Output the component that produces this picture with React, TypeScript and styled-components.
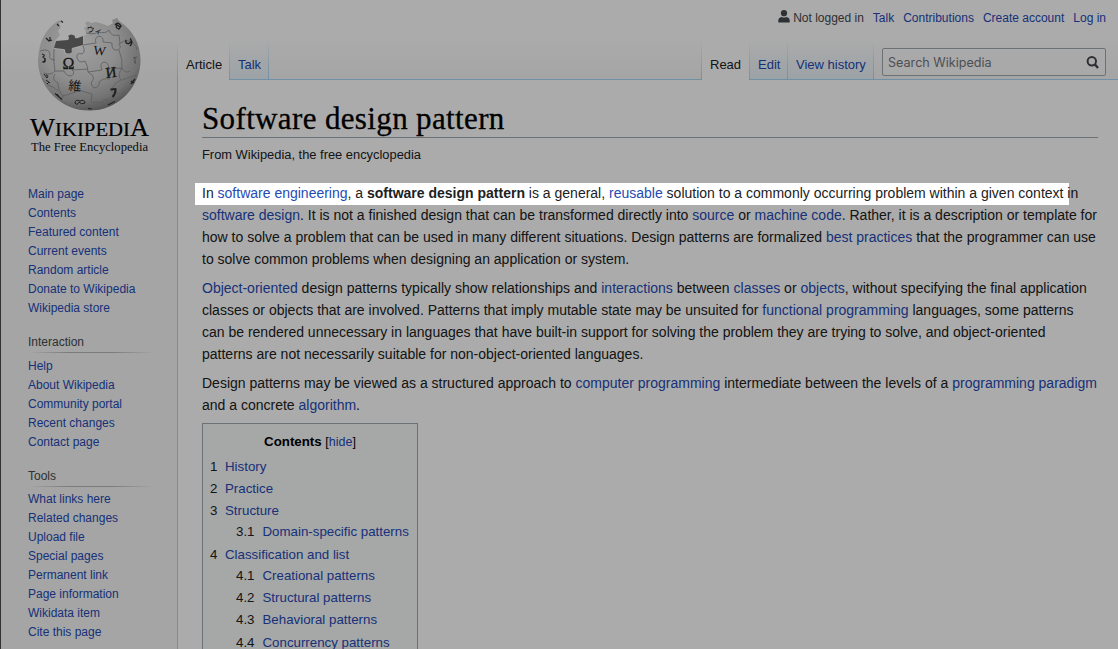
import React from "react";
import styled, { createGlobalStyle } from "styled-components";

const BLUE = "#a7d7f9";
const LINK = "#254ab4";

const Global = createGlobalStyle`
  html, body { margin: 0; padding: 0; background: #f6f6f6; overflow: hidden; }
  * { box-sizing: border-box; }
  body { font-family: "Liberation Sans", Arial, sans-serif; color: #202122; }
`;

const Page = styled.div`
  position: relative;
  display: flex;
  width: 1118px;
  height: 649px;
  overflow: hidden;
  border-left: 1px solid #333;
  background: linear-gradient(#fff 0, #fff 40px, #f6f6f6 80px);
`;

const Spotlight = styled.div`
  position: absolute;
  left: 194px;
  top: 183px;
  width: 874px;
  height: 22px;
  box-shadow: 0 0 0 1200px rgba(0, 0, 0, 0.33);
  pointer-events: none;
`;

const Link = styled.a`
  color: ${LINK};
  text-decoration: none;
`;

const Sidebar = styled.aside`
  width: 176px;
  flex: none;
`;

const LogoBox = styled.div`
  height: 185px;
  svg { display: block; }
`;

const Portal = styled.nav`
  padding-left: 27px;
  margin-bottom: 17px;
  font-size: 12px;
`;

const PortalTitle = styled.h3<{ $gap?: number }>`
  margin: 0 0 ${(p) => p.$gap ?? 4}px;
  width: 126px;
  height: 18px;
  font-size: 12px;
  font-weight: 400;
  line-height: 15px;
  color: #45494d;
  background: linear-gradient(to right, rgba(160,164,170,0) 0, #b4b7bc 33%, #b4b7bc 66%, rgba(160,164,170,0) 100%) bottom / 100% 1px no-repeat;
`;

const PortalItem = styled.div`
  height: 19px;
  line-height: 19px;
  white-space: nowrap;
`;

const Main = styled.div`
  flex: 1;
  display: flex;
  flex-direction: column;
`;

const Personal = styled.div`
  flex: none;
  height: 40px;
  display: flex;
  justify-content: flex-end;
  gap: 9px;
  padding: 8px 12px 0 0;
  font-size: 12px;
  line-height: 20px;
`;

const User = styled.span`
  display: flex;
  color: #45494d;
  svg { margin: 2px 3px 0 0; }
`;

const NavRow = styled.div`
  flex: none;
  height: 40px;
  display: flex;
  background: linear-gradient(${BLUE}, ${BLUE}) bottom / 100% 1px no-repeat;
`;

const Tab = styled.div<{ $w: number; $active?: boolean; $first?: boolean }>`
  width: ${(p) => p.$w}px;
  height: 40px;
  padding: 16px 0 0 8px;
  font-size: 13px;
  line-height: 18px;
  white-space: nowrap;
  background:
    linear-gradient(rgba(167,215,249,0), ${BLUE}) right / 1px 100% no-repeat,
    ${(p) => (p.$first ? `linear-gradient(rgba(167,215,249,0), ${BLUE}) left / 1px 100% no-repeat,` : "")}
    ${(p) =>
      p.$active
        ? "linear-gradient(#fff, #fff)"
        : `linear-gradient(${BLUE}, ${BLUE}) bottom / 100% 1px no-repeat, linear-gradient(#fff, #e8f2f8)`};
  ${(p) => p.$first && "padding-left: 9px;"}
`;

const Spacer = styled.div`
  flex: 1;
`;

const Search = styled.div`
  display: flex;
  justify-content: space-between;
  width: 224px;
  height: 28px;
  margin: 8px 12px 0 8px;
  padding: 0 6px 0 5px;
  border: 1px solid #a2a9b1;
  border-radius: 2px;
  background: rgba(255, 255, 255, 0.5);
  color: #72777d;
  font-family: Inter, "Liberation Sans", sans-serif;
  font-size: 12.6px;
  line-height: 27px;
  white-space: nowrap;
  svg { margin-top: 7px; }
`;

const Content = styled.main`
  flex: 1;
  padding: 21px 20px 0 24px;
  border-left: 1px solid ${BLUE};
  background: #fff;
`;

const Title = styled.h1`
  margin: 0;
  height: 37px;
  border-bottom: 1px solid #a2a9b1;
  font-family: "Liberation Serif", serif;
  font-size: 31px;
  font-weight: 400;
  line-height: 35px;
  letter-spacing: 0.36px;
  color: #000;
  -webkit-text-stroke: 0.3px #000;
  white-space: nowrap;
`;

const Subtitle = styled.div`
  margin: 8px 0 18px;
  height: 18px;
  font-size: 12.88px;
  line-height: 18px;
`;

const Paragraph = styled.p`
  margin: 0 0 7px;
  font-size: 14px;
  line-height: 22px;
`;

const Line = styled.span`
  display: block;
  white-space: nowrap;
`;

const Toc = styled.div`
  width: 216px;
  height: 260px;
  padding: 7px;
  border: 1px solid #a2a9b1;
  background: #f8f9fa;
  font-size: 13.3px;
`;

const TocTitle = styled.div`
  height: 25px;
  line-height: 22px;
  text-align: center;
  color: #000;
  small { font-size: 12.5px; }
`;

const TocRow = styled.div<{ $sub?: boolean }>`
  display: flex;
  height: ${(p) => (p.$sub ? 22.15 : 22)}px;
  line-height: ${(p) => (p.$sub ? 20 : 22)}px;
  padding-left: ${(p) => (p.$sub ? 26 : 0)}px;
  white-space: nowrap;
  span { width: ${(p) => (p.$sub ? 26.5 : 15)}px; }
`;

const Globe = () => (
  <svg width="176" height="170" viewBox="1 0 176 170">
    <defs>
      <radialGradient id="ball" cx="0.4" cy="0.3" r="0.74">
        <stop offset="0" stopColor="#eee" />
        <stop offset="0.5" stopColor="#d4d4d4" />
        <stop offset="0.82" stopColor="#aaa" />
        <stop offset="1" stopColor="#777" />
      </radialGradient>
    </defs>
    <path
      d="M66 19 L62 20 L59 24 L61 27 L58 31 L60 35 L55 41 L54 49 L64 50 Q63 54 68 54 Q73 53 71 49 L83 46 L84 35 L87 35 L84 28 L87 26 L85 23 Q88 20 91 23 L96 22 L103 24 L108 26 L113 23 L112 20 L117 18 L119 21 Q140 35 140.500 60 A51.250 50.500 0 0 1 89.250 110.500 A51.250 50.500 0 0 1 38 60 Q39 33 58 21 Z"
      fill="url(#ball)"
    />
    <path
      d="M56 41 L68 40 Q70 38 68 36 Q71 33 75 36 Q74 39 78 38 L83 36 L83 45 L72 48 Q71 50 72 52 Q68 55 65 52 Q66 49 63 49 L54 48 Z"
      fill="#6c6c6c"
    />
    <g fill="none" stroke="#8c8c8c" strokeWidth="0.8">
      <path d="M83 46 Q86 52 82 54 Q76 52 77 58 Q79 64 85 61 Q88 66 88 72 Q95 76 93 80 Q89 84 94 88 Q100 87 99 82 Q103 78 110 79" />
      <path d="M40 51 Q49 48 50 54 Q48 60 55 60 M54 49 Q53 62 55 71 Q50 76 44 73 M55 71 L64 71 Q66 76 71 76 Q76 73 72 70 L88 69 M88 72 L102 70 Q99 63 104 62 Q110 63 108 69 L122 68 Q125 74 130 71" />
      <path d="M83 45 L96 43 Q94 38 99 36 Q104 37 103 42 L112 43 Q111 51 118 50 Q122 48 119 44 L126 40 M119 50 Q123 60 122 68 Q117 75 121 80 Q113 84 112 90 M55 74 Q51 80 58 83 Q58 91 63 96 L76 92 Q78 88 82 91 L92 94 L91 102 L102 103 Q104 98 108 100 M126 40 Q136 42 137 50 M122 80 L136 75 M63 96 Q59 101 66 104 M42 78 Q47 86 53 87 L58 91 M86 33 Q94 35 98 32 Q106 34 109 30 M109 30 Q111 37 119 35 L120 43 M110 91 Q118 95 125 92" />
    </g>
    <g fill="#242424" fontFamily="Liberation Serif, serif" textAnchor="middle">
      <text x="68.500" y="68.500" fontSize="16" stroke="#242424" strokeWidth=".3">Ω</text>
      <text x="99.500" y="55" fontSize="13" transform="rotate(7 99 51)">W</text>
      <text x="111" y="77.500" fontSize="15" transform="rotate(-7 111 72)" stroke="#242424" strokeWidth=".3">И</text>
      <text x="75" y="90.500" fontSize="13" fontFamily="Noto Sans CJK JP, sans-serif" transform="rotate(5 75 86)">維</text>
      <text x="94.500" y="33" fontSize="8" fontFamily="Noto Sans CJK JP, sans-serif" transform="rotate(10 94 30)">ウィ</text>
    </g>
    <g fill="none" stroke="#333" strokeWidth="1.400">
      <path d="M110.500 89.500 L115.500 89 Q116 93 112.500 97" strokeWidth="2" />
      <path d="M126 40 Q125 44 129 43.500 Q133 41 130 38.500 M131 40 Q133 43 130 46" />
      <path d="M115 25 Q118 21 121 26 L119 29 Q115 28 117 25 L120 27" />
      <path d="M46 38 L49 41 L52 40 M50 37 L50 41 M57 24 L59 26 M61 21 L63 22.500" strokeWidth="1.200" />
      <path d="M42 54 Q46 55 43 57 Q47 60 43 62 Q46 63 45 58" strokeWidth="1.200" />
      <path d="M44 74 L47 78 Q49 75 46 75 M46 80 L50 83 M47 84 L49 82" strokeWidth="1" />
      <path d="M75 103 Q75 99 80 101 Q85 99 85 103 Q81 105 79 102 Q77 106 75 103" strokeWidth="1" />
      <path d="M55 93.500 L62 99.500 M57 94 L60 98 M108 105 L115 101.500 M88 108.500 L92 109" strokeWidth="1.200" />
      <path d="M131 84 L135 79 M131 81 L134 83" strokeWidth="1.500" />
      <path d="M133 58 L137 57 M134 61 L136 64 M135 58 L135 63" stroke="#777" strokeWidth="1" />
    </g>
    <g fill="#000" stroke="#000" strokeWidth=".2" fontFamily="Liberation Serif, serif">
      <text x="30" y="136" fontSize="25" textLength="25" lengthAdjust="spacingAndGlyphs">W</text>
      <text x="55" y="136" fontSize="19" textLength="75" lengthAdjust="spacingAndGlyphs">IKIPEDI</text>
      <text x="130" y="136" fontSize="25" textLength="19" lengthAdjust="spacingAndGlyphs">A</text>
      <text x="31" y="150.500" fontSize="13.500" fill="#111" stroke="none" textLength="117" lengthAdjust="spacingAndGlyphs">The Free Encyclopedia</text>
    </g>
  </svg>
);

const first = ["Main page", "Contents", "Featured content", "Current events", "Random article", "Donate to Wikipedia", "Wikipedia store"];
const interaction = ["Help", "About Wikipedia", "Community portal", "Recent changes", "Contact page"];
const tools = ["What links here", "Related changes", "Upload file", "Special pages", "Permanent link", "Page information", "Wikidata item", "Cite this page"];

const toc: [string, string][] = [
  ["1", "History"],
  ["2", "Practice"],
  ["3", "Structure"],
  ["3.1", "Domain-specific patterns"],
  ["4", "Classification and list"],
  ["4.1", "Creational patterns"],
  ["4.2", "Structural patterns"],
  ["4.3", "Behavioral patterns"],
  ["4.4", "Concurrency patterns"],
];

const Items = ({ items }: { items: string[] }) => (
  <>
    {items.map((t) => (
      <PortalItem key={t}>
        <Link>{t}</Link>
      </PortalItem>
    ))}
  </>
);

export default function App() {
  return (
    <>
      <Global />
      <Page>
        <Sidebar>
          <LogoBox>
            <Globe />
          </LogoBox>
          <Portal>
            <Items items={first} />
          </Portal>
          <Portal>
            <PortalTitle>Interaction</PortalTitle>
            <Items items={interaction} />
          </Portal>
          <Portal>
            <PortalTitle $gap={3}>Tools</PortalTitle>
            <Items items={tools} />
          </Portal>
        </Sidebar>
        <Main>
          <Personal>
            <User>
              <svg width="12" height="14" viewBox="0 0 12 14" fill="#45494d">
                <circle cx="6" cy="3.200" r="3.100" />
                <path d="M0.300 12.500 V10.500 Q0.300 7.500 3.500 7 Q6 8 8.500 7 Q11.700 7.500 11.700 10.500 V12.500 Z" />
              </svg>
              Not logged in
            </User>
            <Link>Talk</Link>
            <Link>Contributions</Link>
            <Link>Create account</Link>
            <Link>Log in</Link>
          </Personal>
          <NavRow>
            <Tab $w={53} $active $first>Article</Tab>
            <Tab $w={39}><Link>Talk</Link></Tab>
            <Spacer />
            <Tab $w={49} $active $first>Read</Tab>
            <Tab $w={38}><Link>Edit</Link></Tab>
            <Tab $w={86}><Link>View history</Link></Tab>
            <Search>
              Search Wikipedia
              <svg width="13" height="13" viewBox="0 0 13 13" fill="none" stroke="#43474c" strokeWidth="2">
                <circle cx="5.800" cy="5.300" r="4.200" />
                <path d="M8.800 8.300 L12 12" strokeWidth="2.400" />
              </svg>
            </Search>
          </NavRow>
          <Content>
            <Title>Software design pattern</Title>
            <Subtitle>From Wikipedia, the free encyclopedia</Subtitle>
            <Paragraph>
              <Line>In <Link>software engineering</Link>, a <b>software design pattern</b> is a general, <Link>reusable</Link> solution to a commonly occurring problem within a given context in</Line>
              <Line><Link>software design</Link>. It is not a finished design that can be transformed directly into <Link>source</Link> or <Link>machine code</Link>. Rather, it is a description or template for</Line>
              <Line>how to solve a problem that can be used in many different situations. Design patterns are formalized <Link>best practices</Link> that the programmer can use</Line>
              <Line>to solve common problems when designing an application or system.</Line>
            </Paragraph>
            <Paragraph>
              <Line><Link>Object-oriented</Link> design patterns typically show relationships and <Link>interactions</Link> between <Link>classes</Link> or <Link>objects</Link>, without specifying the final application</Line>
              <Line>classes or objects that are involved. Patterns that imply mutable state may be unsuited for <Link>functional programming</Link> languages, some patterns</Line>
              <Line>can be rendered unnecessary in languages that have built-in support for solving the problem they are trying to solve, and object-oriented</Line>
              <Line>patterns are not necessarily suitable for non-object-oriented languages.</Line>
            </Paragraph>
            <Paragraph>
              <Line>Design patterns may be viewed as a structured approach to <Link>computer programming</Link> intermediate between the levels of a <Link>programming paradigm</Link></Line>
              <Line>and a concrete <Link>algorithm</Link>.</Line>
            </Paragraph>
            <Toc>
              <TocTitle>
                <b>Contents</b> <small>[<Link>hide</Link>]</small>
              </TocTitle>
              {toc.map(([n, t]) => (
                <TocRow key={n} $sub={n.length > 1}>
                  <span>{n}</span>
                  <Link>{t}</Link>
                </TocRow>
              ))}
            </Toc>
          </Content>
        </Main>
        <Spotlight />
      </Page>
    </>
  );
}
